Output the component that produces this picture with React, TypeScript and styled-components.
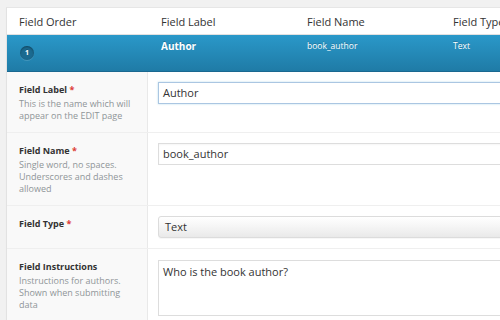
import React from 'react';
import styled, { createGlobalStyle } from 'styled-components';

const GlobalStyle = createGlobalStyle`
    html, body {
        margin: 0;
        padding: 0;
        background: #f1f1f1;
        overflow: hidden;
        font-family: 'Open Sans', 'Liberation Sans', sans-serif;
        color: #333;
    }
`;

const cols = '154px 146px 146px 1fr';

const Page = styled.div`
    width: 500px;
    height: 320px;
    padding: 7px 0 0 6px;
    box-sizing: border-box;
    overflow: hidden;
`;

const Panel = styled.div`
    width: 620px;
    background: #fff;
    border-left: 1px solid #e2e2e2;
    border-top: 1px solid #e6e6e6;
    box-shadow: 0 1px 1px rgba(0, 0, 0, 0.04);
    min-height: 330px;
`;

const HeaderRow = styled.div`
    display: grid;
    grid-template-columns: ${cols};
    height: 26px;
    align-items: center;
    font-size: 11px;
    color: #333;
    border-bottom: 1px solid #e1e1e1;
`;

const HeaderCell = styled.div<{ $first?: boolean }>`
    padding-left: ${(p) => (p.$first ? '12px' : '0')};
    white-space: nowrap;
`;

const FieldBar = styled.div`
    display: grid;
    grid-template-columns: ${cols};
    height: 36px;
    background: linear-gradient(#2a98c9, #1f7ba6);
    border-bottom: 1px solid #1a6890;
    color: #fff;
    text-shadow: 0 -1px 0 rgba(0, 0, 0, 0.2);
`;

const BarCell = styled.div<{ $bold?: boolean }>`
    padding-top: 5px;
    font-size: ${(p) => (p.$bold ? '10px' : '8.5px')};
    font-weight: ${(p) => (p.$bold ? 700 : 400)};
    line-height: 12px;
    white-space: nowrap;
`;

const OrderCell = styled.div`
    display: flex;
    align-items: flex-start;
    padding: 11px 0 0 13px;
`;

const OrderBadge = styled.span`
    display: flex;
    align-items: center;
    justify-content: center;
    width: 14px;
    height: 14px;
    border-radius: 50%;
    background: #1b6a90;
    box-shadow: inset 0 1px 2px rgba(0, 0, 0, 0.35), 0 1px 0 rgba(255, 255, 255, 0.15);
    font-size: 7px;
    line-height: 14px;
    font-weight: 700;
    color: #fff;
`;

const FormRow = styled.div`
    display: grid;
    grid-template-columns: 141px 1fr;
    border-bottom: 1px solid #efefef;
`;

const LabelCell = styled.div`
    background: #f9f9f9;
    border-right: 1px solid #e9e9e9;
    padding: 12px 6px 10px 12px;
`;

const LabelTitle = styled.div`
    font-size: 9px;
    font-weight: 700;
    line-height: 12px;
    color: #333;
    margin-bottom: 2px;
`;

const Required = styled.span`
    color: #dd3d36;
`;

const LabelHint = styled.div`
    font-size: 9px;
    line-height: 12px;
    color: #8f9598;
    white-space: nowrap;
`;

const InputCell = styled.div`
    padding: 10px 0 10px 10px;
`;

const TextInput = styled.div<{ $focus?: boolean }>`
    height: 20px;
    line-height: 20px;
    padding: 0 4px;
    font-size: 11px;
    color: #333;
    background: #fff;
    border: 1px solid ${(p) => (p.$focus ? '#aac6e2' : '#dddddd')};
    box-shadow: ${(p) => (p.$focus ? '0 0 2px rgba(30, 140, 190, 0.3)' : 'inset 0 1px 2px rgba(0, 0, 0, 0.04)')};
`;

const SelectBox = styled.div`
    height: 20px;
    line-height: 20px;
    padding: 0 6px;
    font-size: 11px;
    color: #333;
    background: linear-gradient(#ffffff, #f7f7f7 40%, #e9e9e9);
    border: 1px solid #dcdcdc;
    border-radius: 3px 0 0 3px;
    box-shadow: 0 1px 0 rgba(0, 0, 0, 0.03);
`;

const TextArea = styled.div`
    height: 46px;
    padding: 4px 4px;
    font-size: 11px;
    line-height: 14px;
    color: #333;
    background: #fff;
    border: 1px solid #dddddd;
    margin-top: 1px;
`;

interface FieldSetting {
    label: string;
    required?: boolean;
    hint?: string[];
    control: React.ReactNode;
}

const settings: FieldSetting[] = [
    {
        label: 'Field Label',
        required: true,
        hint: ['This is the name which will', 'appear on the EDIT page'],
        control: <TextInput $focus>Author</TextInput>,
    },
    {
        label: 'Field Name',
        required: true,
        hint: ['Single word, no spaces.', 'Underscores and dashes', 'allowed'],
        control: <TextInput>book_author</TextInput>,
    },
    {
        label: 'Field Type',
        required: true,
        control: <SelectBox>Text</SelectBox>,
    },
    {
        label: 'Field Instructions',
        hint: ['Instructions for authors.', 'Shown when submitting', 'data'],
        control: <TextArea>Who is the book author?</TextArea>,
    },
];

const App: React.FC = () => {
    return (
        <Page>
            <GlobalStyle />
            <Panel>
                <HeaderRow>
                    <HeaderCell $first>Field Order</HeaderCell>
                    <HeaderCell>Field Label</HeaderCell>
                    <HeaderCell>Field Name</HeaderCell>
                    <HeaderCell>Field Type</HeaderCell>
                </HeaderRow>
                <FieldBar>
                    <OrderCell>
                        <OrderBadge>1</OrderBadge>
                    </OrderCell>
                    <BarCell $bold>Author</BarCell>
                    <BarCell>book_author</BarCell>
                    <BarCell>Text</BarCell>
                </FieldBar>
                {settings.map((s) => (
                    <FormRow key={s.label}>
                        <LabelCell>
                            <LabelTitle>
                                {s.label}
                                {s.required && <Required> *</Required>}
                            </LabelTitle>
                            {s.hint?.map((line) => (
                                <LabelHint key={line}>{line}</LabelHint>
                            ))}
                        </LabelCell>
                        <InputCell>{s.control}</InputCell>
                    </FormRow>
                ))}
            </Panel>
        </Page>
    );
};

export default App;
